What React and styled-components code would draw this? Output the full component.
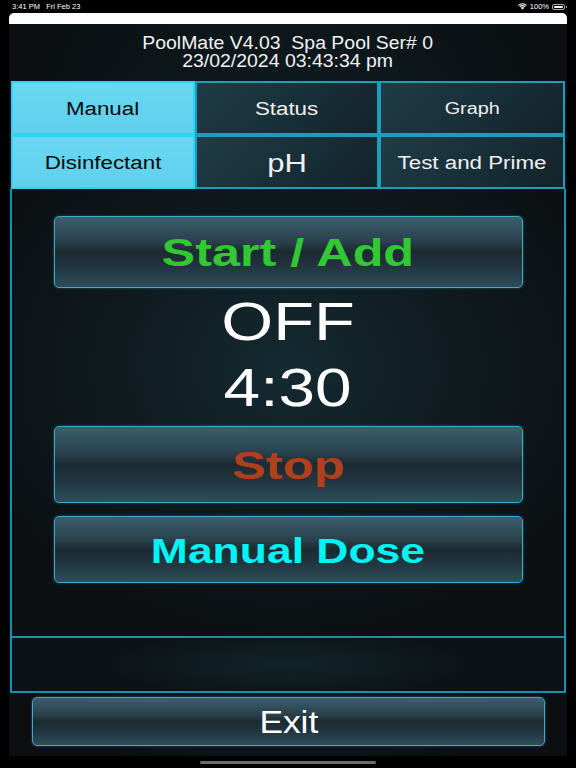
import React from "react";
import styled, { createGlobalStyle } from "styled-components";

const GlobalStyle = createGlobalStyle`
  html, body {
    margin: 0;
    padding: 0;
    background: #000;
  }
  body {
    font-family: "Liberation Sans", Arial, sans-serif;
  }
`;

const tabs = [
  { label: "Manual", active: true },
  { label: "Status" },
  { label: "Graph", size: 16 },
  { label: "Disinfectant", active: true },
  { label: "pH", size: 25 },
  { label: "Test and Prime" },
];

const App = () => (
  <Page>
    <GlobalStyle />
    <StatusBar>
      <span>3:41 PM&nbsp;&nbsp;&nbsp;Fri Feb 23</span>
      <StatusRight>
        <svg width="9" height="7" viewBox="0 0 18 14">
          <path d="M9 13.5 L5.6 9.6 A5 5 0 0 1 12.4 9.6 Z" fill="#fff" />
          <path d="M2.8 6.8 A9 9 0 0 1 15.2 6.8 L13.6 8.5 A6.6 6.6 0 0 0 4.4 8.5 Z" fill="#fff" />
          <path d="M0 4 A13 13 0 0 1 18 4 L16.4 5.7 A10.6 10.6 0 0 0 1.6 5.7 Z" fill="#fff" />
        </svg>
        <span>100%</span>
        <Battery>
          <span />
        </Battery>
      </StatusRight>
    </StatusBar>

    <Window>
      <TitleStrip />
      <Screen>
        <Header>
          <Stretch sx={1.08}>PoolMate V4.03&nbsp;&nbsp;Spa Pool Ser# 0</Stretch>
          <Stretch sx={1.08}>23/02/2024 03:43:34 pm</Stretch>
        </Header>

        <TabGrid>
          {tabs.map((t) => (
            <Tab key={t.label} active={t.active} size={t.size}>
              <Stretch sx={1.24}>{t.label}</Stretch>
            </Tab>
          ))}
        </TabGrid>

        <Panel>
          <ActionButton h={72} color="#33c833" mt={27}>
            <Stretch sx={1.29}>Start / Add</Stretch>
          </ActionButton>
          <Readout>
            <Stretch sx={1.26}>OFF</Stretch>
            <Stretch sx={1.24}>4:30</Stretch>
          </Readout>
          <ActionButton h={77} color="#b1401c" mt={5}>
            <Stretch sx={1.3}>Stop</Stretch>
          </ActionButton>
          <ActionButton h={67} color="#00f4f4" mt={13} size={35}>
            <Stretch sx={1.27}>Manual Dose</Stretch>
          </ActionButton>
        </Panel>
        <EmptyBox />

        <ExitButton>
          <Stretch sx={1.14}>Exit</Stretch>
        </ExitButton>
      </Screen>
    </Window>
    <HomeBar />
  </Page>
);

const Page = styled.div`
  width: 576px;
  height: 768px;
  background: #000;
  display: flex;
  flex-direction: column;
  overflow: hidden;
  color: #fff;
`;

const Stretch = styled.span`
  display: inline-block;
  white-space: nowrap;
  transform: scaleX(${(p) => p.sx || 1});
`;

const StatusBar = styled.div`
  height: 13px;
  padding: 0 11px 0 12px;
  display: flex;
  align-items: center;
  justify-content: space-between;
  font-size: 7.5px;
  font-weight: 400;
  color: #fff;
`;

const StatusRight = styled.div`
  display: flex;
  align-items: center;
  gap: 3px;
`;

const Battery = styled.div`
  width: 13px;
  height: 6px;
  border: 1px solid #aaa;
  border-radius: 2px;
  padding: 1px;
  box-sizing: border-box;
  position: relative;

  span {
    display: block;
    width: 100%;
    height: 100%;
    background: #fff;
    border-radius: 1px;
  }

  &::after {
    content: "";
    position: absolute;
    right: -3px;
    top: 1px;
    width: 1px;
    height: 2px;
    background: #aaa;
  }
`;

const Window = styled.div`
  margin: 0 9px;
  display: flex;
  flex-direction: column;
`;

const TitleStrip = styled.div`
  height: 11px;
  background: #fff;
  border-radius: 5px 5px 0 0;
`;

const Screen = styled.div`
  height: 732px;
  box-sizing: border-box;
  background: radial-gradient(
    ellipse 55% 70% at 50% 45%,
    #13292f 0%,
    #0f1b20 45%,
    #0b0f11 100%
  );
  display: flex;
  flex-direction: column;
`;

const Header = styled.div`
  padding-top: 10px;
  height: 47px;
  display: flex;
  flex-direction: column;
  align-items: center;
  font-size: 18px;
  line-height: 18px;
  color: #f2f2f2;
`;

const TabGrid = styled.div`
  display: grid;
  grid-template-columns: 184px 184px 186px;
  grid-template-rows: 54px 54px;
  margin: 0 2px;
`;

const Tab = styled.div`
  display: flex;
  align-items: center;
  justify-content: center;
  box-sizing: border-box;
  padding-top: 2px;
  font-size: ${(p) => p.size || 18}px;
  color: ${(p) => (p.active ? "#0a0a0a" : "#f0f0f0")};
  background: ${(p) =>
    p.active
      ? "linear-gradient(#6ad8f2, #5fcfec)"
      : "linear-gradient(135deg, #1f3c47 0%, #18303a 50%, #13222a 100%)"};
  border: 2px solid ${(p) => (p.active ? "#2fd3f3" : "#1b9dbb")};
`;

const Panel = styled.div`
  height: 447px;
  box-sizing: border-box;
  margin: 0 1px;
  border: 2px solid #1b8fb0;
  border-top: none;
  border-bottom: none;
  display: flex;
  flex-direction: column;
  align-items: center;
  background: radial-gradient(
    ellipse 60% 60% at 50% 40%,
    #142a31 0%,
    #101b20 50%,
    #0c1013 100%
  );
`;

const buttonFace = `
  background: linear-gradient(
    180deg,
    #3b5e6e 0%,
    #2a414c 35%,
    #1c2a31 50%,
    #213540 70%,
    #2e4d5b 100%
  );
  border: 1.5px solid #3fa9c8;
  border-radius: 5px;
  box-shadow: 0 0 3px rgba(40, 160, 200, 0.5);
  box-sizing: border-box;
  display: flex;
  align-items: center;
  justify-content: center;
  padding-top: 2px;
`;

const ActionButton = styled.div`
  ${buttonFace}
  width: 469px;
  height: ${(p) => p.h}px;
  margin-top: ${(p) => p.mt}px;
  color: ${(p) => p.color};
  font-size: ${(p) => p.size || 39}px;
  font-weight: 700;
`;

const Readout = styled.div`
  margin-top: 1px;
  display: flex;
  flex-direction: column;
  align-items: center;
  font-size: 53px;
  line-height: 66px;
  color: #fff;
`;

const EmptyBox = styled.div`
  height: 57px;
  margin: 0 1px;
  box-sizing: border-box;
  border: 2px solid #1b8fb0;
  background: radial-gradient(
    ellipse 50% 100% at 50% 50%,
    #11242a 0%,
    #0c1215 70%
  );
`;

const ExitButton = styled.div`
  ${buttonFace}
  height: 49px;
  margin: 4px 22px 0 23px;
  font-size: 31px;
  color: #fff;
`;

const HomeBar = styled.div`
  width: 176px;
  height: 3px;
  border-radius: 2px;
  background: #6a6a6a;
  margin: 5px auto 0;
`;

export default App;
